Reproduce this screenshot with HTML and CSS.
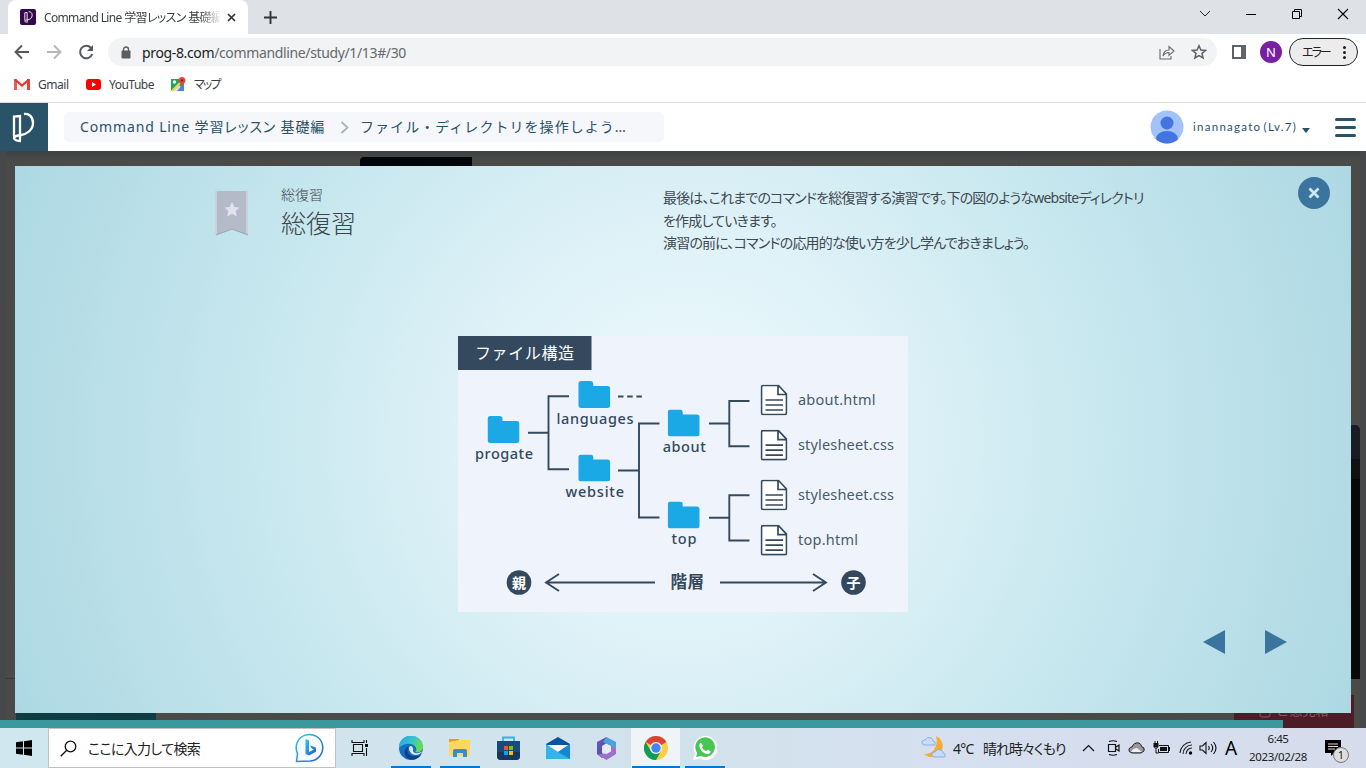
FILE: index.html
```html
<!DOCTYPE html>
<html lang="ja">
<head>
<meta charset="utf-8">
<title>Command Line 学習レッスン 基礎編</title>
<link rel="stylesheet" href="styles.css">
</head>
<body>
<svg class="defs" width="0" height="0" aria-hidden="true">
  <defs>
    <symbol id="plogo" viewBox="0 0 23 31"><path d="M2 24.500V4.500l6-.5v24M12 2c5-1 9 3 9 9 0 7-6 11-12 12-5 .5-7.500 2-7 3.500 1 2 4 2.500 7 2.500" fill="none" stroke="#fff" stroke-width="2.300"/></symbol>
    <symbol id="folder" viewBox="0 0 32 27"><path d="M3 0h9q3 0 3 3v2h14q3 0 3 3v16q0 3-3 3H3q-3 0-3-3V3q0-3 3-3z" fill="#1ba9e6"/></symbol>
    <symbol id="doc" viewBox="0 0 27 31"><path d="M2.500 1H18l8 8.500v19q0 1.500-1.500 1.500h-22Q1 30 1 28.500v-26Q1 1 2.500 1z" fill="#fff"/><path d="M2.500 1H18l8 8.500v19q0 1.500-1.500 1.500h-22Q1 30 1 28.500v-26Q1 1 2.500 1zM17.500 1v9H26M5 15.500h17.500M5 20.500h17.500M5 25.500h17.500" fill="none" stroke="#34495e" stroke-width="1.700"/></symbol>
    <linearGradient id="edgeA" x1="0" y1="0" x2="1" y2=".5"><stop stop-color="#22a0de"/><stop offset=".5" stop-color="#35c1d5"/><stop offset="1" stop-color="#66dd4f"/></linearGradient>
    <linearGradient id="bingA" x1="0" y1="0" x2="1" y2="1"><stop stop-color="#2fc5ef"/><stop offset="1" stop-color="#2459ca"/></linearGradient>
    <linearGradient id="officeA" x1="0" y1="0" x2="1" y2="1"><stop stop-color="#7556c9"/><stop offset="1" stop-color="#3e4998"/></linearGradient>
  </defs>
</svg>

<header class="tabstrip">
  <div class="tab">
    <span class="favicon"><svg width="9" height="12"><use href="#plogo"/></svg></span>
    <span class="tab-title">Command Line 学習レッスン 基礎編</span>
    <svg class="tab-x" width="9" height="9"><path d="M1 1l7 7M8 1l-7 7" stroke="#333" stroke-width="1.700"/></svg>
  </div>
  <svg class="newtab" width="13" height="13"><path d="M6.500 0v13M0 6.500h13" stroke="#333" stroke-width="1.900"/></svg>
  <div class="window-buttons">
    <svg width="12" height="12"><path d="M1 3l5 5 5-5" fill="none" stroke="#222"/></svg>
    <svg width="12" height="12"><path d="M1 6.500h10" stroke="#000"/></svg>
    <svg width="12" height="12"><path d="M1.500 3.500h7v7h-7zM3.500 3V1.500h7v7H9" fill="none" stroke="#000"/></svg>
    <svg width="12" height="12"><path d="M1 1l10 10M11 1L1 11" stroke="#000" stroke-width="1.100"/></svg>
  </div>
</header>

<div class="toolbar">
  <div class="nav">
    <svg width="16" height="16"><path d="M15 8H2M8 1.500L1.500 8 8 14.500" fill="none" stroke="#55595d" stroke-width="1.900"/></svg>
    <svg width="16" height="16"><path d="M1 8h13M8 1.500L14.500 8 8 14.500" fill="none" stroke="#b4b6b9" stroke-width="1.900"/></svg>
    <svg width="16" height="16"><path d="M13 4A6.200 6.200 0 1 0 14.200 10" fill="none" stroke="#55595d" stroke-width="2"/><path d="M15 1v6H9z" fill="#55595d"/></svg>
  </div>
  <div class="omnibox">
    <svg width="10" height="13"><path d="M2.500 5V3.500a2.500 2.500 0 0 1 5 0V5" fill="none" stroke="#5a5d61" stroke-width="1.400"/><rect x=".5" y="4.500" width="9" height="8" rx="1" fill="#5a5d61"/></svg>
    <span class="url"><b>prog-8.com</b>/commandline/study/1/13#/30</span>
    <svg class="share" width="16" height="15"><path d="M1 4v10h11v-3M4 11c.5-4 2.500-6 6-6V1.500L15 6l-5 4.300V7.500C7 7.500 5.500 8.500 4 11z" fill="none" stroke="#66696d" stroke-width="1.100"/></svg>
    <svg width="16" height="16" viewBox="0 0 16 16"><path d="M8 1.700l1.900 4.300 4.700.4-3.600 3 1.100 4.600L8 11.600 3.900 14 5 9.400l-3.600-3 4.700-.4z" fill="none" stroke="#5f6368" stroke-width="1.500"/></svg>
  </div>
  <svg class="panel-icon" width="14" height="14"><path d="M0 0h14v14H0z" fill="#5f6368"/><path d="M2 2h7v10H2z" fill="#fff"/></svg>
  <span class="profile">N</span>
  <span class="error-pill"><span>エラー</span><i></i></span>
</div>

<nav class="bookmarks">
  <svg width="16" height="12"><path d="M0 1h3v11H0z" fill="#dc655b"/><path d="M3 3h10v9H3z" fill="#eee"/><path d="M13 1h3v11h-3z" fill="#d5493f"/><path d="M1 1.500L8 7.500l7-6" fill="none" stroke="#dd3d31" stroke-width="2.200"/></svg>
  <span class="bm-gmail">Gmail</span>
  <svg width="15" height="11"><rect width="15" height="11" rx="3" fill="#f00"/><path d="M6 3l4 2.500L6 8z" fill="#fff"/></svg>
  <span class="bm-youtube">YouTube</span>
  <svg width="15" height="15"><path d="M0 2h13v12H0z" fill="#23a45b"/><path d="M0 14l7-7 7 7z" fill="#d8dde2"/><path d="M6 14l7-8v8z" fill="#4a84ea"/><path d="M1 14L12 3" stroke="#f3d34d" stroke-width="2"/><circle cx="3.500" cy="5" r="1.700" fill="#fff"/><path d="M11 10c0-3-3.500-3.500-3.500-6.500a3.500 3.500 0 0 1 7 0C14.500 6.500 11 7 11 10z" fill="#e34a3c"/><circle cx="11" cy="3.500" r="1.200" fill="#8c2820"/></svg>
  <span class="bm-map">マップ</span>
</nav>

<div class="sitebar">
  <div class="site-logo"><svg width="23" height="31"><use href="#plogo"/></svg></div>
  <div class="crumbs">
    <span class="crumb-course">Command Line 学習レッスン 基礎編</span>
    <svg width="9" height="13"><path d="M1.500 1l6 5.500-6 5.500" fill="none" stroke="#a9b0bd" stroke-width="1.700"/></svg>
    <span class="crumb-lesson">ファイル・ディレクトリを操作しよう…</span>
  </div>
  <svg class="avatar" width="34" height="34"><defs><clipPath id="round"><circle cx="17" cy="17" r="16.500"/></clipPath></defs><g clip-path="url(#round)"><path d="M0 0h34v34H0z" fill="#a1c2fa"/><circle cx="17" cy="13" r="6.500" fill="#4374e0"/><ellipse cx="17" cy="29" rx="11" ry="8" fill="#4374e0"/></g></svg>
  <span class="user">inannagato (Lv.7)</span>
  <i class="caret"></i>
  <div class="menu"><i></i><i></i><i></i></div>
</div>

<main class="stage">
  <div class="behind tab-behind"></div>
  <div class="behind panel-left"></div>
  <div class="behind panel-right"></div>
  <div class="behind term-behind"></div>
  <div class="behind green-behind"></div>
  <div class="behind red-behind"><svg width="12" height="10"><rect x="1" y="1" width="10" height="8" rx="2" fill="none" stroke="#855a60"/></svg>ご意見箱</div>

  <section class="slide">
    <div class="slide-head">
      <svg class="ribbon" width="34" height="46"><path d="M1 1h32v44l-16-6-16 6z" fill="#b5bac8"/><path d="M0 0h2v44H0zM31 0h2v44h-2z" fill="#ccd0da"/><path d="M1 45l16-6 16 6" fill="none" stroke="#94a5ad" stroke-width="1"/><path d="M17 12l2.300 5 5.200.6-3.900 3.500 1.200 5.400L17 23.700l-4.800 2.800 1.200-5.400-3.900-3.500 5.200-.6z" fill="#e0e3ed"/></svg>
      <div class="titles"><p>総復習</p><h1>総復習</h1></div>
      <div class="copy"><p class="l1">最後は、これまでのコマンドを総復習する演習です。下の図のようなwebsiteディレクトリ</p><p class="l2">を作成していきます。</p><p class="l3">演習の前に、コマンドの応用的な使い方を少し学んでおきましょう。</p></div>
      <span class="close"><svg width="12" height="12"><path d="M1.500 1.500l9 9M10.500 1.500l-9 9" stroke="#c9e9f5" stroke-width="2.800"/></svg></span>
    </div>

    <svg class="diagram" width="450" height="276" viewBox="458 336 450 276">
      <path d="M458 336h450v276H458z" fill="#eff4fc"/>
      <path d="M458 336h133.500v34H458z" fill="#34495e"/>
      <text x="475" y="359" textLength="99" class="cap">ファイル構造</text>
      <g fill="none" stroke="#34495e" stroke-width="1.900">
        <path d="M528 432.700h20M569 396.300h-20.500v73H569M618 470.500h21M659.500 423.500H639v94h20.500M709 423.500h20M749.500 401H729.300v45.300h20.200M709 517.800h20M749.500 495.200H729.300v45.300h20.200"/>
        <path d="M618 396.500h24" stroke-dasharray="5.500 3.700"/>
        <path d="M655 582.500H547M559 574l-13 8.500 13 8.500M720 582.500h106M813 574l13 8.500-13 8.500"/>
      </g>
      <use href="#folder" x="487.500" y="416" width="32" height="27"/>
      <use href="#folder" x="578.300" y="381" width="32" height="27"/>
      <use href="#folder" x="578.300" y="454.500" width="32" height="27"/>
      <use href="#folder" x="667.700" y="409.500" width="32" height="27"/>
      <use href="#folder" x="667.700" y="501.500" width="32" height="27"/>
      <use href="#doc" x="760.500" y="384.500" width="27" height="31"/>
      <use href="#doc" x="760.500" y="429.700" width="27" height="31"/>
      <use href="#doc" x="760.500" y="479.500" width="27" height="31"/>
      <use href="#doc" x="760.500" y="524.700" width="27" height="31"/>
      <g class="node">
        <text x="475" y="458.500" textLength="58">progate</text>
        <text x="556.500" y="423.700" textLength="77">languages</text>
        <text x="565.500" y="497" textLength="58.500">website</text>
        <text x="662.700" y="451.500" textLength="43">about</text>
        <text x="671.500" y="543.700" textLength="25">top</text>
      </g>
      <g class="file">
        <text x="798" y="404.500" textLength="77.500">about.html</text>
        <text x="798" y="449.500" textLength="96">stylesheet.css</text>
        <text x="798" y="499.500" textLength="96">stylesheet.css</text>
        <text x="798" y="544.500" textLength="60">top.html</text>
      </g>
      <circle cx="519" cy="582.500" r="12.300" fill="#34495e"/><circle cx="853.500" cy="582.500" r="12.300" fill="#34495e"/>
      <text x="519" y="587.500" class="badge">親</text><text x="853.500" y="587.500" class="badge">子</text>
      <text x="670.500" y="588.300" textLength="33.500" class="level">階層</text>
    </svg>

    <div class="pager"><svg width="22" height="24"><path d="M22 0v24L0 12z" fill="#3b759e"/></svg><svg width="22" height="24"><path d="M0 0v24l22-12z" fill="#3b759e"/></svg></div>
  </section>
  <div class="progress"></div>
</main>

<footer class="taskbar">
  <div class="start"><svg width="16" height="16"><path d="M0 2.300l7-1v6.200H0zM8 1.200L16 0v7.500H8zM0 8.500h7v6.200l-7-1zM8 8.500h8V16l-8-1.200z" fill="#000"/></svg></div>
  <div class="search">
    <svg width="17" height="17"><circle cx="10.500" cy="6.500" r="5.300" fill="none" stroke="#111" stroke-width="1.300"/><path d="M6.700 10.300L.7 16.300" stroke="#111" stroke-width="1.300"/></svg>
    <span>ここに入力して検索</span>
    <svg class="bing" width="30" height="30"><path d="M1.500 28.500l1-8A13.300 13.300 0 1 1 15.500 28z" fill="#f5fafe" stroke="url(#bingA)" stroke-width="1.500"/><path d="M10.500 6l3.500 1.500V19l-3.500 2zM14 19l5-2.500-2.500-1.200-1.500-3 6 2.500v4L14 22.500 10.500 21z" fill="url(#bingA)"/></svg>
  </div>
  <div class="app task"><svg width="18" height="16"><path d="M2.500 4.500h9v7h-9zM1 0v2.500h12V0M1 16v-2.500h12V16M15.500 0v3M15.500 8v8" fill="none" stroke="#111" stroke-width="1.100"/><path d="M14 4h3v3h-3z" fill="#111"/></svg></div>
  <div class="app on"><svg width="24" height="24"><circle cx="12" cy="12" r="12" fill="#126fc2"/><path d="M0 12A12 12 0 0 1 24 11c0 4-4 6-8 5 3-2 1-7-4-8C6 7 2 10 0 12z" fill="url(#edgeA)"/><path d="M10 10c-4 6 1 11 7 10 3 0 5-1 6-3-4 9-15 8-17 2-1-4 0-7 4-9z" fill="#123f86"/><path d="M10 12c1-4 5-1 4 3 1 3 5 3 10 0-5 7-14 4-14-3z" fill="#d6eaf2"/></svg></div>
  <div class="app on"><svg width="22" height="20"><path d="M0 1h10v4H0z" fill="#dda21b"/><path d="M0 4l10-2h11v16H0z" fill="#ffd75e"/><path d="M4 18v-5q0-2 2-2h10q2 0 2 2v6h-4v-4H8v4H4z" fill="#378cca"/></svg></div>
  <div class="app"><svg width="24" height="24"><path d="M6 7V1.500h11V7" fill="none" stroke="#31b4e8" stroke-width="1.800"/><path d="M0 5h23v15q0 4-4 4H4q-4 0-4-4z" fill="#164b7c"/><path d="M0 16h23v4q0 4-4 4H4q-4 0-4-4z" fill="#18395d"/><path d="M7 10h4v4H7z" fill="#f35325"/><path d="M12 10h4v4h-4z" fill="#81bc06"/><path d="M7 15h4v4H7z" fill="#05a6f0"/><path d="M12 15h4v4h-4z" fill="#ffba08"/></svg></div>
  <div class="app"><svg width="24" height="22"><path d="M0 7l12-7 12 7v3H0z" fill="#07549f"/><path d="M2 8h20v7H2z" fill="#f5f7f9"/><path d="M0 7l12 8 12-8v15H0z" fill="#31b3eb"/><path d="M12 15l12-8v15z" fill="#1688d0"/></svg></div>
  <div class="app"><svg width="21" height="23"><path d="M10.500 0L1 5v12l5 4 3-2-3-3V9l7-4.500z" fill="url(#officeA)"/><path d="M10.500 0L20 5v9l-5-2V9L7 5z" fill="#4aa3dc"/><path d="M20 11v6l-9.500 6L1 17.500l9-1 5-3V9z" fill="#a070c8"/><path d="M10.500 7l4.500 2.500v5L10.500 17 6 14.500v-5z" fill="#e4edf5"/></svg></div>
  <div class="app active on"><svg width="24" height="24"><circle cx="12" cy="12" r="12" fill="#ffcd40"/><path d="M12 12L1.600 6A12 12 0 0 1 22.400 6z" fill="#db4437"/><path d="M1.600 6A12 12 0 0 0 12 24l5-9H7z" fill="#109d58"/><circle cx="12" cy="12" r="6" fill="#f1f5f8"/><circle cx="12" cy="12" r="4.700" fill="#4285f4"/></svg></div>
  <div class="app on"><svg width="24" height="24"><path d="M0 24l2-6.500A12 12 0 1 1 7 22.500z" fill="#fff"/><path d="M3 21l1.300-4A9.800 9.800 0 1 1 8 20z" fill="#45c655"/><path d="M8 6.500l2 3.200-1 1.600q1.500 3 4.300 4l1.500-1.500 3 1.500q-.5 3-3 2.700C9.500 17.500 6.500 13 6.300 9.500Q6.400 7 8 6.500z" fill="#fff"/></svg></div>
  <div class="tray">
    <svg class="weather" width="25" height="24"><path d="M15 0A11 11 0 1 1 3 18C11 19 18 11 15 0z" fill="#f7ad32"/><path d="M3 9q-3-1-2-4 2-1 3-1 2-4 6-2 2 1 2 3 3 0 2 4z" fill="#c8dcfa" stroke="#8dade2"/><path d="M13 21q-3-1-2-4 2-1 3-1 2-4 6-2 2 1 2 3 3 0 2 4z" fill="#c8dcfa" stroke="#8dade2"/></svg>
    <span class="temp">4°C</span><span class="cond">晴れ時々くもり</span>
    <svg class="t1" width="13" height="8"><path d="M1 7l5.500-5.500L12 7" fill="none" stroke="#111" stroke-width="1.200"/></svg>
    <svg class="t2" width="13" height="16"><path d="M2 1.500q4-1.500 8 0M2 14.500q4 1.500 8 0M1.500 4.500h7v7h-7zM9 7l3-2v6L9 9" fill="none" stroke="#111" stroke-width="1.200"/></svg>
    <svg class="t3" width="17" height="12"><path d="M4 11q-4-1-3-4 1-2 3-2 2-5 7-4 2 1 3 4 3 0 2 4l-3 2z" fill="#999" stroke="#222"/><path d="M3 10q2-4 6-4l5 4z" fill="#eee"/></svg>
    <svg class="t4" width="17" height="14"><path d="M6 4.500h9.500v7H5.500V8M1 2v4q0 1 2 1t2-1V2M2 0v2M4.500 0v2M3 7v5h2.500" fill="none" stroke="#111"/><path d="M1 2h4v4H1zM7 6h7v4H7zM16 6h1v4h-1z" fill="#111"/></svg>
    <svg class="t5" width="14" height="14"><path d="M1 12A12 12 0 0 1 12 1M4 13A9 9 0 0 1 13 4M7 13A6 6 0 0 1 13 7" fill="none" stroke="#222" stroke-width="1.100"/><circle cx="11.500" cy="12" r="1.700"/></svg>
    <svg class="t6" width="18" height="14"><path d="M1 5h2.500L7 1.500v11L3.500 9H1zM9.500 5q1.500 2 0 4M12 3q3.500 4 0 8M14.500 1q5 6 0 12" fill="none" stroke="#111" stroke-width="1.100"/></svg>
    <span class="ime">A</span>
    <div class="clock"><span>6:45</span><span class="date">2023/02/28</span></div>
    <div class="notice"><svg width="16" height="16"><path d="M0 0h16v13H9l-3 3v-3H0z"/><path d="M3 4h10M3 6.500h10M3 9h7" stroke="#ddd"/></svg><b>1</b></div>
  </div>
</footer>
</body>
</html>
```

FILE: styles.css
```css
* { box-sizing: border-box; }
body { margin: 0; width: 1366px; height: 768px; overflow: hidden; display: flex; flex-direction: column; font-family: "Noto Sans", "Noto Sans CJK JP", sans-serif; color: #3c4043; background: #fff; }
svg { display: block; flex: none; }
.defs { position: absolute; }
span { white-space: nowrap; }
p, h1 { margin: 0; white-space: nowrap; }

.tabstrip { height: 34px; flex: none; display: flex; align-items: center; background: #dee1e6; padding-left: 8px; }
.tab { width: 240px; height: 34px; background: #fff; border-radius: 8px 8px 0 0; display: flex; align-items: center; padding-left: 12px; }
.favicon { width: 16px; height: 16px; border-radius: 2px; background: #35084b; display: grid; place-items: center; }
.tab-title { width: 176px; margin-left: 8px; font-size: 12px; letter-spacing: -.65px; font-feature-settings: "palt"; -webkit-mask-image: linear-gradient(90deg, #000 88%, transparent 101%); mask-image: linear-gradient(90deg, #000 88%, transparent 101%); }
.tab-x { margin-left: 7px; }
.newtab { margin-left: 16px; }
.window-buttons { display: flex; gap: 34px; margin: -6px 17px 0 auto; }

.toolbar { height: 36px; flex: none; display: flex; align-items: center; padding-left: 14px; }
.nav { display: flex; gap: 16px; }
.omnibox { width: 1109px; height: 28px; border-radius: 14px; background: #f1f3f4; margin-left: 14px; padding: 0 10px 0 13px; display: flex; align-items: center; }
.url { margin-left: 11px; font-size: 14px; letter-spacing: -.36px; color: #66696d; }
.url b { font-weight: 400; color: #202124; }
.share { margin: 0 16px 0 auto; }
.panel-icon { margin-left: 15px; }
.profile { width: 22px; height: 22px; border-radius: 50%; background: #7b1fa2; color: #fff; font-size: 13px; line-height: 22px; text-align: center; margin-left: 14px; }
.error-pill { width: 69px; height: 28px; margin-left: 7px; border: 1px solid #222; border-radius: 14px; background: #ececec; display: flex; align-items: center; padding: 0 11px 0 12px; justify-content: space-between; font-size: 12px; color: #222; }
.error-pill span { font-feature-settings: "palt"; letter-spacing: -2px; }
.error-pill i { width: 3px; height: 3px; background: #222; border-radius: 50%; box-shadow: 0 -5px #222, 0 5px #222; }

.bookmarks { height: 33px; flex: none; border-bottom: 1px solid #dadce0; display: flex; align-items: center; padding: 0 0 4px 14px; font-size: 12px; }
.bookmarks span { margin: 0 17px 0 8px; font-feature-settings: "palt"; }
.bookmarks .bm-gmail { width: 31px; letter-spacing: -.45px; }
.bookmarks .bm-youtube { width: 45px; letter-spacing: -.5px; }
.bookmarks .bm-map { letter-spacing: -1.900px; }

.sitebar { height: 48px; flex: none; display: flex; align-items: center; color: #29526a; }
.site-logo { width: 48px; height: 48px; background: #2a5368; display: grid; place-items: center; padding-right: 2px; }
.crumbs { width: 600px; height: 30px; margin-left: 16px; border-radius: 5px; background: #f5f7fb; display: flex; align-items: center; padding: 0 0 2px 16px; font-size: 14px; }
.crumbs svg { margin: 2px 11px 0 14px; }
.crumb-course { width: 246px; letter-spacing: .86px; font-feature-settings: "palt"; }
.crumb-lesson { letter-spacing: 1.050px; }
.avatar { margin-left: 486px; }
.user { margin-left: 9px; width: 104px; font: 11.500px/14px Lato, sans-serif; letter-spacing: 1.270px; word-spacing: -2px; margin-top: -1px; }
.caret { border: 4px solid transparent; border-top: 5px solid #29526a; border-bottom: 0; margin: 6px 0 0 5px; }
.menu { margin: 0 10px 0 auto; width: 21px; display: flex; flex-direction: column; gap: 5px; }
.menu i { height: 3px; border-radius: 2px; background: #29526a; }

.stage { position: relative; height: 577px; flex: none; background: #4a4a49; padding: 15px 15px 0; display: flex; flex-direction: column; box-shadow: inset 6px 0 #464749, inset -6px 0 #464749, inset 0 5px 4px #404344; }
.behind { position: absolute; }
.tab-behind { left: 360px; top: 6px; width: 112px; height: 20px; background: #000609; border-radius: 4px 0 0 0; }
.panel-left { left: 6px; top: 527px; width: 20px; height: 1px; background: #363636; }
.panel-right { right: 6px; top: 6px; width: 342px; height: 20px; border-left: 2px solid #474849; border-radius: 4px; }
.term-behind { right: 6px; top: 274px; width: 60px; height: 254px; border-radius: 0 5px 0 0; background: linear-gradient(#191b25 34px, #101211 34px, #101211 54px, #060908 54px); }
.green-behind { left: 16px; top: 550px; width: 140px; height: 27px; background: #103d41; }
.red-behind { left: 1234px; top: 544px; width: 120px; height: 33px; background: #4c1c27; color: #855a60; display: flex; align-items: flex-start; justify-content: center; gap: 5px; font-size: 13px; line-height: 20px; padding-top: 5px; }
.red-behind svg { margin-top: 8px; }
.slide { position: relative; height: 547px; flex: none; background: radial-gradient(circle, #effafd 0%, #dff2f8 28%, #c7e7ee 60%, #add8e3 100%); display: flex; flex-direction: column; align-items: center; }
.slide-head { width: 100%; height: 170px; display: flex; align-items: flex-start; padding: 25px 21px 0 200px; }
.ribbon { margin-top: -1px; }
.titles { margin: -6px 0 0 32px; width: 75px; color: #3d4348; }
.titles p { font: 300 14px/18px "Noto Sans CJK JP", sans-serif; }
.titles h1 { font: 300 25px/38px "Noto Sans CJK JP", sans-serif; }
.copy { margin: -4px 0 0 307px; color: #404850; font-size: 14px; line-height: 22.500px; width: 490px; }
.copy p { font-feature-settings: "palt"; }
.copy .l1 { letter-spacing: -.82px; }
.copy .l2 { letter-spacing: -.8px; }
.copy .l3 { letter-spacing: -.82px; }
.close { width: 32px; height: 32px; border-radius: 50%; background: #3b759e; display: grid; place-items: center; margin: -14px 0 0 auto; }
.diagram { font-family: "Noto Sans", "Noto Sans CJK JP", sans-serif; fill: #34495e; }
.cap { font-size: 16px; fill: #fff; }
.node { font-size: 14.500px; font-weight: 500; }
.file { font-size: 14.500px; fill: #485b6e; }
.badge { font-size: 14px; font-weight: 700; fill: #fff; text-anchor: middle; }
.level { font-size: 16.500px; font-weight: 700; }
.pager { align-self: flex-end; display: flex; gap: 40px; margin: 18px 64px 0 0; }
.progress { position: relative; width: 1283px; height: 8px; background: #3b999e; margin: 7px 0 0 -15px; }

.taskbar { height: 40px; flex: none; display: flex; background: linear-gradient(90deg, #d0e7ef, #d2e2ec 50%, #d6dfef 72%, #d6dcec); }
.start { width: 48px; display: grid; place-items: center; }
.search { width: 288px; border: 1px solid #c2c2c2; background: #fff; display: flex; align-items: center; padding: 0 10px 0 11px; font-size: 14px; color: #222; }
.search span { margin-left: 11px; letter-spacing: -.65px; font-feature-settings: "palt"; }
.bing { margin-left: auto; }
.app { width: 49px; padding-top: 2px; display: grid; place-items: center; border-bottom: 2px solid transparent; }
.on { background: linear-gradient(#0078d7, #0078d7) bottom / 40px 2px no-repeat border-box; }
.task { width: 50px; padding-right: 2px; }
.active { background: linear-gradient(#0078d7, #0078d7) bottom / 48px 2px no-repeat border-box, #eef4f8; }
.tray { margin-left: auto; width: 445px; display: flex; align-items: center; color: #222; }
.temp { margin-left: 7px; width: 23px; font-size: 14px; letter-spacing: -.8px; }
.cond { margin-left: 7px; width: 84px; font-size: 14px; font-feature-settings: "palt"; letter-spacing: -1.050px; }
.t1 { margin-left: 15px; }
.t2 { margin-left: 12px; }
.t3 { margin-left: 8px; }
.t4 { margin-left: 8px; }
.t5 { margin-left: 9px; }
.t6 { margin-left: 6px; }
.ime { width: 12px; margin-left: 8px; font-size: 19px; color: #000; }
.clock { width: 60px; margin-left: 11px; display: flex; flex-direction: column; align-items: center; font-size: 11.500px; line-height: 18px; letter-spacing: -.5px; }
.date { letter-spacing: -.3px; }
.notice { position: relative; margin-left: 17px; }
.notice b { position: absolute; left: 8px; top: 7px; width: 16px; height: 16px; border: 1px solid #777; border-radius: 50%; background: #ddd; font: 11px/14px "Noto Sans", sans-serif; text-align: center; }
```
